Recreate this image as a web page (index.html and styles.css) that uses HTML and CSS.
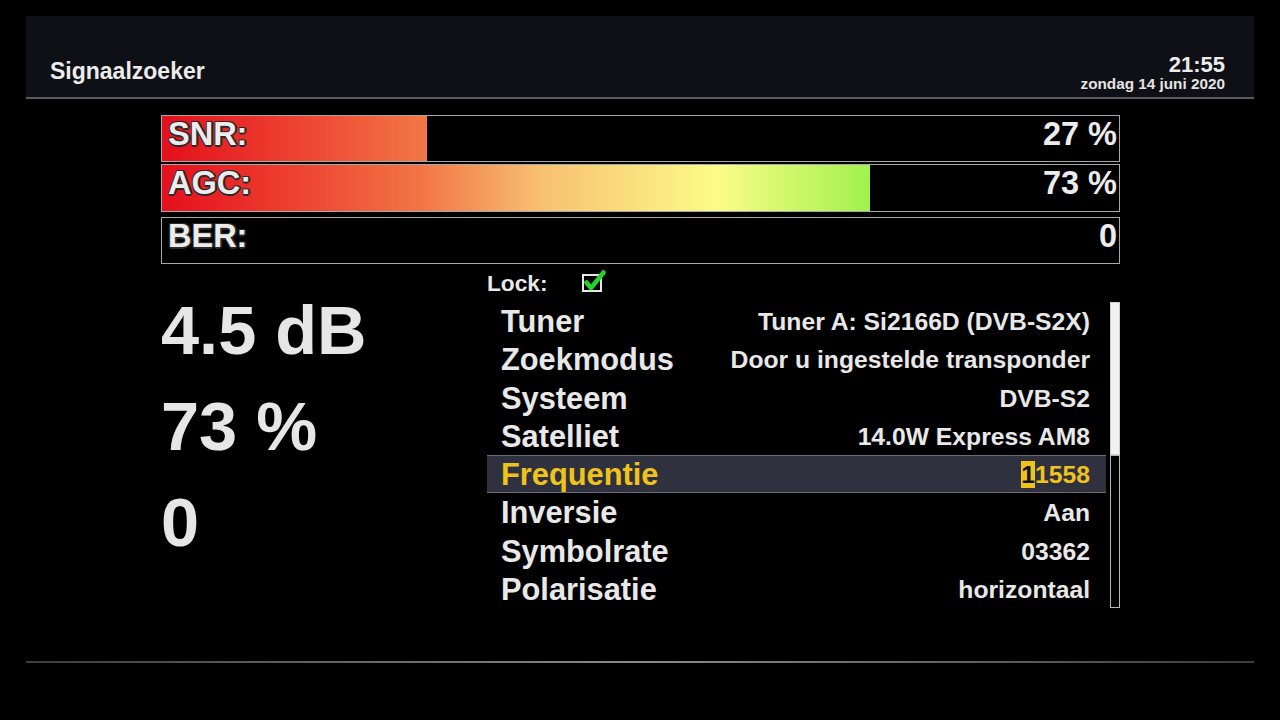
FILE: index.html
```html
<!DOCTYPE html>
<html lang="nl">
<head>
<meta charset="utf-8">
<title>Signaalzoeker</title>
<link rel="stylesheet" href="styles.css">
</head>
<body>
<div class="screen">
  <header class="topbar">
    <div class="title">Signaalzoeker</div>
    <div class="clock">
      <div class="time">21:55</div>
      <div class="date">zondag 14 juni 2020</div>
    </div>
  </header>

  <section class="meters">
    <div class="meter snr">
      <div class="fill" style="width:265px"></div>
      <div class="m-row"><span class="m-label">SNR:</span><span class="m-value">27 %</span></div>
    </div>
    <div class="meter agc">
      <div class="fill" style="width:708px"></div>
      <div class="m-row"><span class="m-label">AGC:</span><span class="m-value">73 %</span></div>
    </div>
    <div class="meter ber">
      <div class="fill" style="width:0px"></div>
      <div class="m-row"><span class="m-label">BER:</span><span class="m-value">0</span></div>
    </div>
  </section>

  <section class="details">
    <div class="bigvals">
      <div class="big">4.5 dB</div>
      <div class="big">73 %</div>
      <div class="big">0</div>
    </div>
    <div class="panel">
      <div class="lock">
        <span class="lock-label">Lock:</span>
        <svg class="check" width="26" height="24" viewBox="0 0 26 24">
          <rect x="2" y="5" width="18" height="16" fill="none" stroke="#e8e8e8" stroke-width="2"/>
          <path d="M5.5 12.5 L10 18 L22.5 2.5" fill="none" stroke="#22d42a" stroke-width="4.5" stroke-linecap="round" stroke-linejoin="round"/>
        </svg>
      </div>
      <div class="listwrap">
        <ul class="list">
          <li class="row"><span class="r-label">Tuner</span><span class="r-value">Tuner A: Si2166D (DVB-S2X)</span></li>
          <li class="row"><span class="r-label">Zoekmodus</span><span class="r-value">Door u ingestelde transponder</span></li>
          <li class="row"><span class="r-label">Systeem</span><span class="r-value">DVB-S2</span></li>
          <li class="row"><span class="r-label">Satelliet</span><span class="r-value">14.0W Express AM8</span></li>
          <li class="row selected"><span class="r-label">Frequentie</span><span class="r-value"><span class="cursor">1</span>1558</span></li>
          <li class="row"><span class="r-label">Inversie</span><span class="r-value">Aan</span></li>
          <li class="row"><span class="r-label">Symbolrate</span><span class="r-value">03362</span></li>
          <li class="row"><span class="r-label">Polarisatie</span><span class="r-value">horizontaal</span></li>
        </ul>
        <div class="scrollbar"><div class="thumb"></div><div class="track"></div></div>
      </div>
    </div>
  </section>

  <div class="footline"></div>
</div>
</body>
</html>
```

FILE: styles.css
```css
* { box-sizing: border-box; }

html, body {
  margin: 0;
  padding: 0;
  background: #000;
}

body {
  font-family: "Liberation Sans", Arial, sans-serif;
  font-weight: bold;
  color: #e8e8e8;
}

.screen {
  width: 1280px;
  height: 720px;
  display: flex;
  flex-direction: column;
  overflow: hidden;
}

/* header */
.topbar {
  margin: 16px 26px 0 26px;
  height: 83px;
  background: #0f1015;
  border-bottom: 2px solid #5c5c60;
  padding: 0 29px 0 24px;
  display: flex;
  justify-content: space-between;
  align-items: flex-start;
}

.title {
  font-size: 23px;
  line-height: 23px;
  padding-top: 44px;
  color: #ececec;
}

.clock {
  padding-top: 38px;
  text-align: right;
}

.time {
  font-size: 22px;
  line-height: 22px;
  color: #ececec;
}

.date {
  font-size: 15.3px;
  line-height: 16px;
  color: #e4e4e4;
}

/* meters */
.meters {
  margin: 16px 0 0 161px;
  width: 959px;
  display: flex;
  flex-direction: column;
}

.meter {
  height: 47px;
  border: 1px solid #a8a8a8;
  display: grid;
  grid-template-columns: 1fr;
  grid-template-rows: 1fr;
  background: #000;
}

.meter.agc {
  height: 48px;
  margin-top: 2px;
}

.meter.ber {
  margin-top: 5px;
}

.fill {
  grid-area: 1 / 1;
  height: 100%;
  justify-self: start;
  background: linear-gradient(to right,
    #e40f1c 0%,
    #ec3a2e 12%,
    #f27545 27%,
    #f8c272 40%,
    #fcfc88 58%,
    #a4f24c 73.5%);
  background-size: 957px 100%;
  background-repeat: no-repeat;
}

.m-row {
  grid-area: 1 / 1;
  display: flex;
  justify-content: space-between;
  align-items: flex-start;
  padding: 0 2px 0 6px;
  font-size: 32.5px;
  line-height: 37px;
}

.m-label {
  color: #ececec;
  text-shadow:
    -1px -1px 0 #2a2a2a, 1px -1px 0 #2a2a2a,
    -1px 1px 0 #2a2a2a, 1px 1px 0 #2a2a2a,
    0 2px 0 #2a2a2a, 2px 0 0 #2a2a2a;
}

.m-value {
  color: #ececec;
}

/* details */
.details {
  margin: 0 0 0 161px;
  height: 344px;
  display: flex;
}

.bigvals {
  width: 326px;
  padding-top: 19px;
}

.big {
  font-size: 68.5px;
  line-height: 96px;
  color: #e6e6e6;
}

.panel {
  width: 633px;
  display: flex;
  flex-direction: column;
}

.lock {
  height: 38px;
  display: flex;
  align-items: center;
  font-size: 22.7px;
}

.lock-label {
  width: 94px;
}

.check {
  display: block;
  margin-top: -2px;
}

.listwrap {
  display: flex;
  gap: 4px;
}

.list {
  list-style: none;
  margin: 0;
  padding: 0;
  width: 619px;
}

.row {
  height: 38.25px;
  display: flex;
  justify-content: space-between;
  align-items: center;
  padding: 2px 16px 0 14px;
}

.r-label {
  font-size: 30.8px;
}

.r-value {
  font-size: 24.7px;
}

.row.selected {
  background: #30313e;
  border-top: 1px solid #6a6b74;
  border-bottom: 1px solid #6a6b74;
  color: #f0c21c;
}

.cursor {
  display: inline-block;
  background: #f0c21c;
  color: #121212;
  line-height: 27px;
}

.scrollbar {
  width: 10px;
  height: 306px;
  display: flex;
  flex-direction: column;
}

.thumb {
  height: 153px;
  background: #f2f2f2;
  border: 1px solid #cfcfcf;
}

.track {
  flex: 1;
  background: #000;
  border: 1px solid #b8b8b8;
}

.footline {
  margin: 53px 26px 0 26px;
  height: 2px;
  background: linear-gradient(to right, #3c3c3c, #8a8a8a 50%, #3c3c3c);
}
```
